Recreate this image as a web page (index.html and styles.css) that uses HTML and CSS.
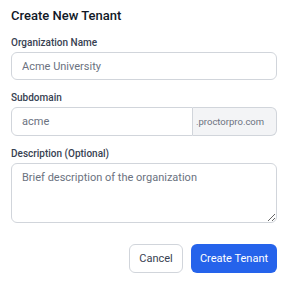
FILE: index.html
```html
<!DOCTYPE html>
<html lang="en">
<head>
    <meta charset="UTF-8">
    <meta name="viewport" content="width=device-width, initial-scale=1.0">
    <title>Create New Tenant</title>
    <link rel="stylesheet" href="styles.css">
</head>
<body>
    <form class="tenant-form">
        <h2 class="form-title">Create New Tenant</h2>

        <div class="field">
            <label class="field-label">Organization Name</label>
            <input class="text-input" type="text" placeholder="Acme University">
        </div>

        <div class="field">
            <label class="field-label">Subdomain</label>
            <div class="input-group">
                <input class="text-input grouped" type="text" placeholder="acme">
                <span class="addon">.proctorpro.com</span>
            </div>
        </div>

        <div class="field">
            <label class="field-label">Description (Optional)</label>
            <textarea class="text-area" placeholder="Brief description of the organization"></textarea>
        </div>

        <div class="actions">
            <button type="button" class="btn btn-cancel">Cancel</button>
            <button type="button" class="btn btn-primary">Create Tenant</button>
        </div>
    </form>
</body>
</html>
```

FILE: styles.css
```css
* {
    margin: 0;
    padding: 0;
    box-sizing: border-box;
}

body {
    font-family: Roboto, "Noto Sans", sans-serif;
    background: #fff;
    color: #111827;
}

.tenant-form {
    display: flex;
    flex-direction: column;
    padding: 6px 6px 0 11px;
}

.form-title {
    font-size: 13px;
    font-weight: 500;
    line-height: 20px;
    color: #111827;
    margin-bottom: 10px;
}

.field {
    display: flex;
    flex-direction: column;
    margin-bottom: 11px;
}

.field-label {
    font-size: 10px;
    font-weight: 500;
    line-height: 14px;
    color: #374151;
    margin-bottom: 2px;
}

.text-input,
.text-area {
    font-family: inherit;
    font-size: 11px;
    color: #111827;
    border: 1px solid #d1d5db;
    border-radius: 6px;
    padding: 0 10px;
    background: #fff;
    outline: none;
}

.text-input {
    height: 28px;
}

.text-area {
    height: 60px;
    padding-top: 7px;
    resize: vertical;
}

.text-input::placeholder,
.text-area::placeholder {
    color: #6b7280;
}

.input-group {
    display: flex;
    height: 29px;
}

.text-input.grouped {
    flex: 1;
    min-width: 0;
    height: 100%;
    border-radius: 6px 0 0 6px;
}

.addon {
    display: flex;
    align-items: center;
    flex: 0 0 84px;
    padding: 0 8px 0 3px;
    font-size: 9.5px;
    color: #6b7280;
    background: #f3f4f6;
    border: 1px solid #d1d5db;
    border-left: none;
    border-radius: 0 6px 6px 0;
}

.actions {
    display: flex;
    justify-content: flex-end;
    gap: 8px;
    margin-top: 10px;
}

.btn {
    font-family: inherit;
    font-size: 11px;
    height: 29px;
    border-radius: 6px;
    cursor: pointer;
}

.btn-cancel {
    width: 54px;
    background: #fff;
    color: #374151;
    border: 1px solid #d1d5db;
}

.btn-primary {
    width: 86px;
    background: #2563eb;
    color: #fff;
    border: none;
}
```
